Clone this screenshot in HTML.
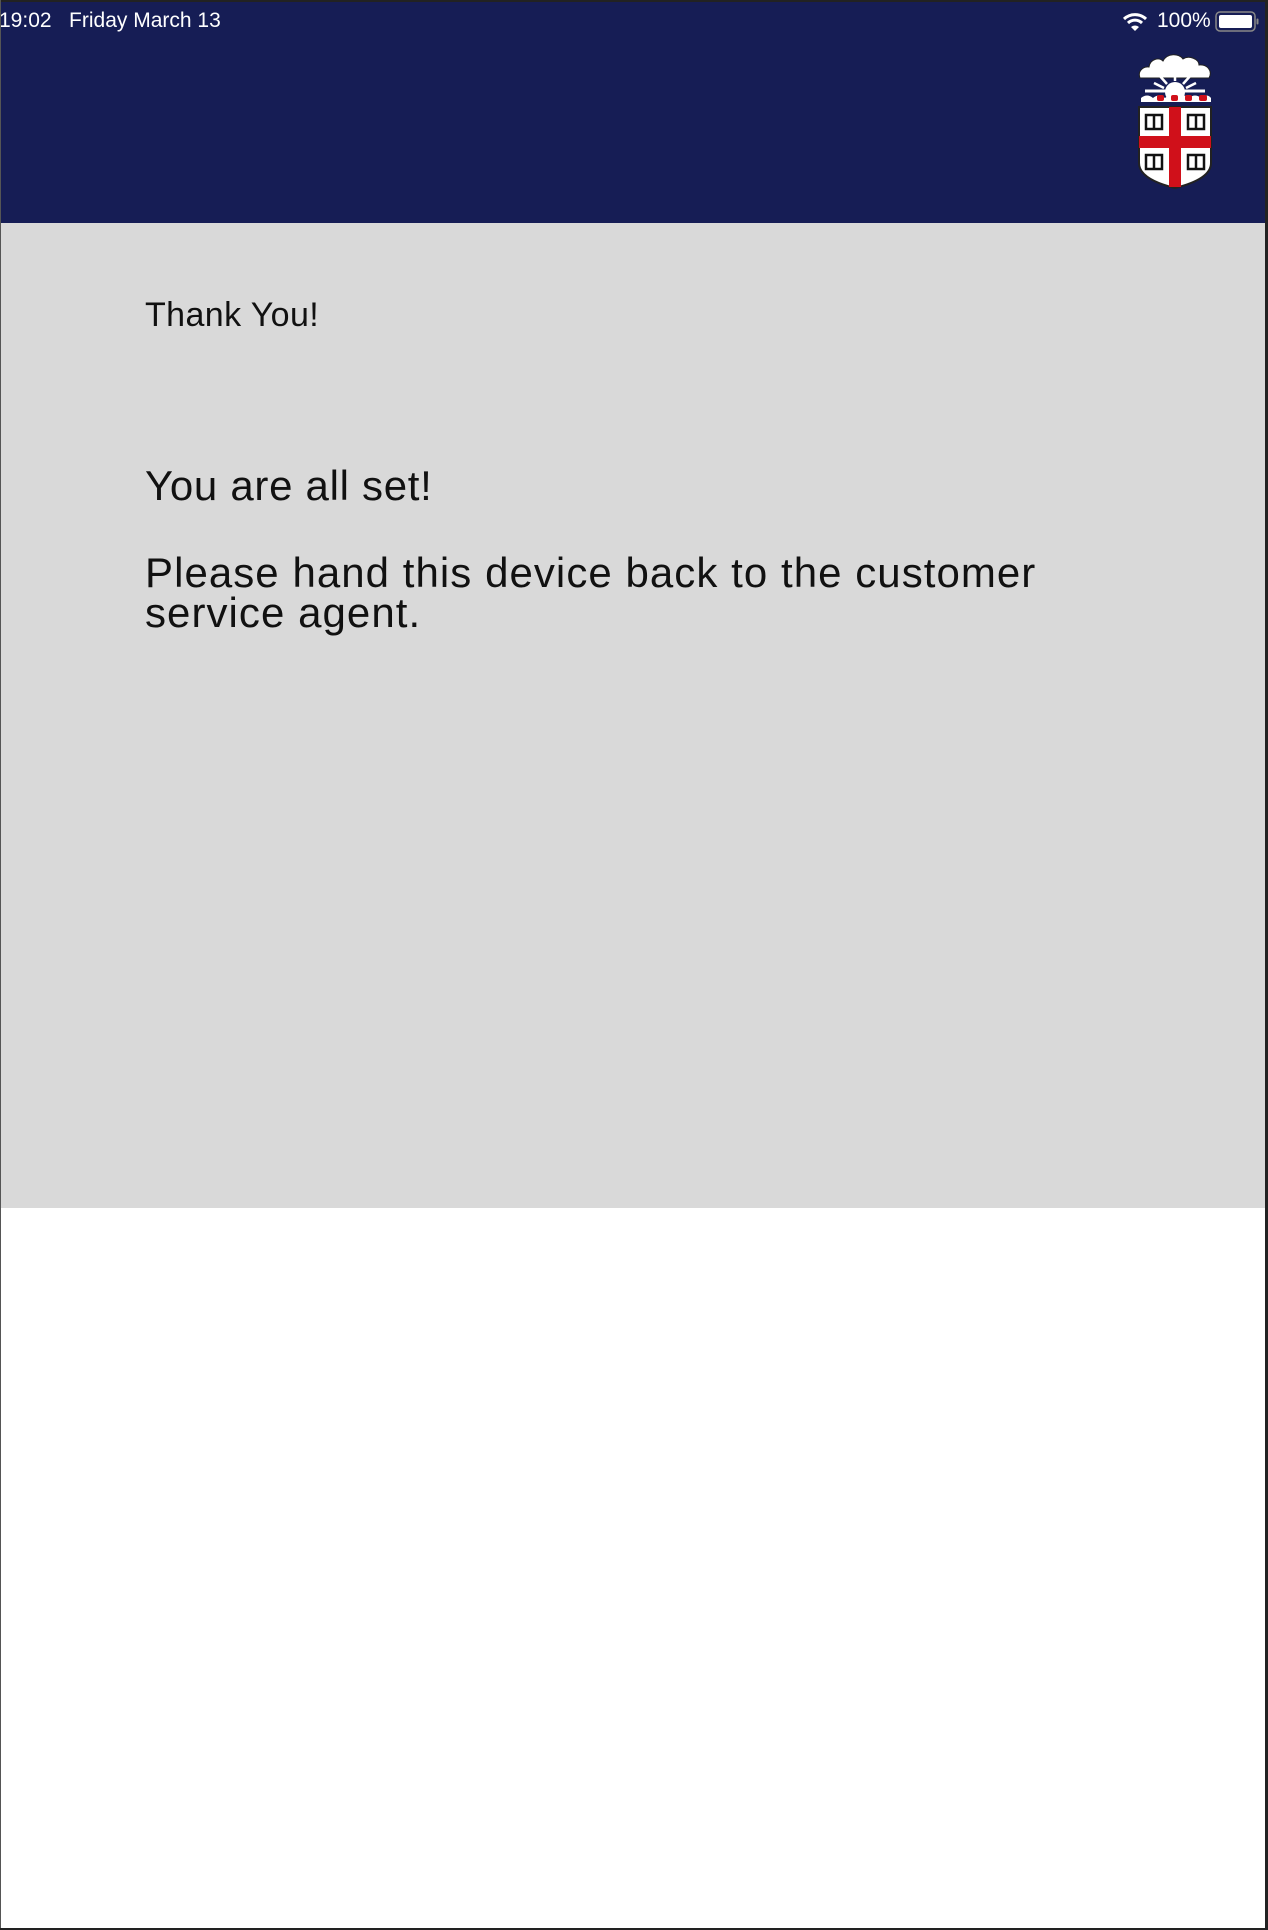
<!DOCTYPE html>
<html><head><meta charset="utf-8"><style>
html,body{margin:0;padding:0}
body{width:1268px;height:1930px;position:relative;overflow:hidden;background:#fff;font-family:"Liberation Sans",sans-serif}
.top{position:absolute;left:0;top:0;width:1268px;height:2px;background:#222}
.hdr{position:absolute;left:0;top:2px;width:1268px;height:221px;background:#161d55}
.gray{position:absolute;left:0;top:223px;width:1268px;height:985px;background:#d9d9d9}
.rb{position:absolute;right:0;top:0;width:3px;height:1930px;background:#222}
.lb{position:absolute;left:0;top:0;width:1px;height:1930px;background:#555}
.bb{position:absolute;left:0;bottom:0;width:1268px;height:2px;background:#222}
.st{position:absolute;color:#fff;font-size:21px;top:9px}
.t{position:absolute;left:145px;color:#111}
</style></head><body>
<div class="top"></div>
<div class="hdr"></div>
<div class="gray"></div>
<div class="st" style="left:-1px">19:02&nbsp;&nbsp;&nbsp;Friday March 13</div>
<svg style="position:absolute;left:1122px;top:12px" width="26" height="20" viewBox="0 0 26 20">
<path d="M2 7 A16 16 0 0 1 24 7" stroke="#fff" stroke-width="3" fill="none"/>
<path d="M6 11 A10 10 0 0 1 20 11" stroke="#fff" stroke-width="3" fill="none"/>
<path d="M13 19 L9 15 A6 6 0 0 1 17 15 Z" fill="#fff"/></svg>
<div class="st" style="left:1157px">100%</div>
<svg style="position:absolute;left:1215px;top:11px" width="45" height="22" viewBox="0 0 45 22">
<rect x="1" y="1" width="39" height="19" rx="4" fill="none" stroke="#888" stroke-width="1.5"/>
<rect x="4" y="4" width="33" height="13" rx="2" fill="#fff"/>
<rect x="41.5" y="7.5" width="2" height="6" rx="1" fill="#888"/></svg>
<svg style="position:absolute;left:1137px;top:53px" width="76" height="136" viewBox="0 0 76 136">
<path d="M3 25 C0 17 8 13 12 14 C13 6 22 4 26 8 C30 0 42 0 46 6 C52 2 62 6 62 12 C70 11 76 18 72 25 Z" fill="#fff" stroke="#222" stroke-width="1"/>
<path d="M8 38 L68 38" stroke="#fff" stroke-width="3"/>
<circle cx="38" cy="39" r="10" fill="#fff"/>
<g stroke="#fff" stroke-width="2.5"><path d="M38 28 L38 16M30 31 L22 22M46 31 L54 22M27 35 L17 30M49 35 L59 30"/></g>
<path d="M4 45 Q10 40 16 45 Q22 40 28 45 Q34 40 40 45 Q46 40 52 45 Q58 40 64 45 Q70 40 74 45 L74 49 L4 49 Z" fill="#fff"/>
<g fill="#d0101a"><rect x="20" y="42" width="7" height="6" rx="2"/><rect x="34" y="42" width="7" height="6" rx="2"/><rect x="48" y="42" width="7" height="6" rx="2"/><rect x="62" y="42" width="8" height="6" rx="2"/></g>
<path d="M2 54 L74 54 L74 110 Q74 126 38 135 Q2 126 2 110 Z" fill="#fff" stroke="#222" stroke-width="2"/>
<rect x="32" y="54" width="12" height="80" fill="#d0101a"/>
<rect x="2" y="83" width="72" height="12" fill="#d0101a"/>
<g fill="none" stroke="#111" stroke-width="2.5">
<rect x="9" y="62" width="16" height="14"/><path d="M17 62 V76"/>
<rect x="51" y="62" width="16" height="14"/><path d="M59 62 V76"/>
<rect x="9" y="102" width="16" height="14"/><path d="M17 102 V116"/>
<rect x="51" y="102" width="16" height="14"/><path d="M59 102 V116"/></g>
</svg>
<div class="t" style="top:296px;font-size:34px;letter-spacing:0.4px">Thank You!</div>
<div class="t" style="top:466px;font-size:42px;line-height:40px;letter-spacing:0.7px">You are all set!</div>
<div class="t" style="top:553px;font-size:42px;line-height:40px;width:1000px;letter-spacing:1.05px">Please hand this device back to the customer<br>service agent.</div>
<div class="lb"></div><div class="rb"></div><div class="bb"></div>
</body></html>
